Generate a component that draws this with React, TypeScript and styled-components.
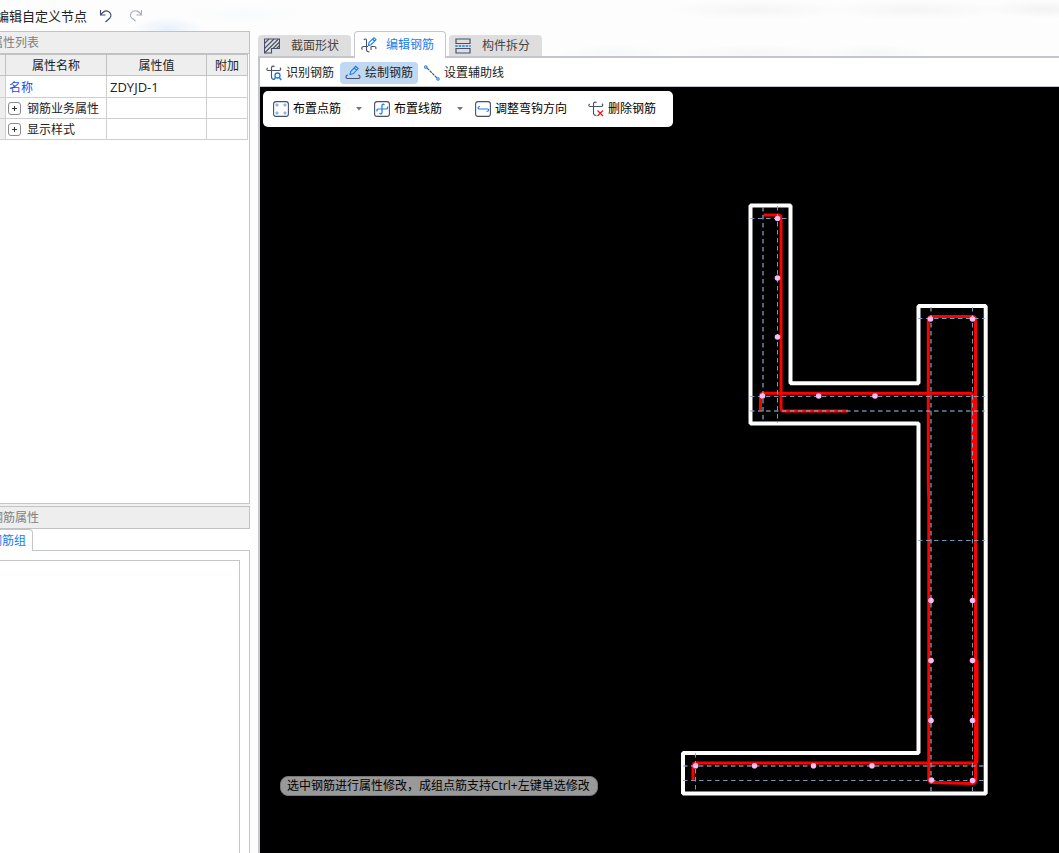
import React from "react";
import styled, { createGlobalStyle, css } from "styled-components";

const LINE = "#c3c6cb";
const BLUE = "#1c7ce6";

const GlobalStyle = createGlobalStyle`
  *, *::before, *::after { box-sizing: border-box; }
  body {
    margin: 0;
    overflow: hidden;
    background: #fdfdfd;
    color: #222;
    font: 12px/16px "Open Sans", "Noto Sans CJK SC", sans-serif;
  }
  button { font: inherit; color: inherit; border: 0; background: none; padding: 0; white-space: nowrap; }
  svg { display: block; flex: none; }
`;

/* The window hangs slightly past the left edge of the screen. */
const Shell = styled.div`
  display: flex;
  flex-direction: column;
  height: 100vh;
  margin-left: -16px;
  background:
    radial-gradient(ellipse 36px 12px at 184px 29px, #e6f1fc, transparent),
    radial-gradient(ellipse 60px 10px at 260px 14px, #f8fafc, transparent),
    radial-gradient(ellipse 90px 10px at 770px 10px, #f5f5f5, transparent),
    radial-gradient(ellipse 90px 10px at 930px 10px, #f5f5f5, transparent),
    radial-gradient(ellipse 60px 9px at 1060px 9px, #f3f3f3, transparent),
    radial-gradient(ellipse 60px 8px at 630px 53px, #f5f7f9, transparent),
    radial-gradient(ellipse 90px 8px at 770px 53px, #f6f6f6, transparent),
    radial-gradient(ellipse 60px 8px at 890px 53px, #f5f6f8, transparent),
    #fdfdfd;
`;

const TitleBar = styled.header`
  display: flex;
  align-items: center;
  flex: none;
  height: 31px;
  padding-left: 12px;
`;

const Title = styled.h1`
  margin: 0 11px 0 0;
  font-size: 13px;
  font-weight: 400;
  line-height: 20px;
`;

const HistoryButton = styled.button`
  width: 16px;
  height: 16px;
  margin-right: 14px;
  color: #3f4a63;
  &:disabled { color: #a9adb5; }
`;

const Body = styled.div`
  display: flex;
  flex: 1;
  min-height: 0;
`;

const Sidebar = styled.aside`
  display: flex;
  flex-direction: column;
  flex: none;
  width: 266px;
  margin-right: 8px;
  background: #f0f0f0;
`;

const Panel = styled.section<{ $fill?: boolean }>`
  display: flex;
  flex-direction: column;
  flex: ${(p) => (p.$fill ? "1" : "0 0 347px")};
  min-height: 0;
  margin-bottom: ${(p) => (p.$fill ? 2 : 0)}px;
  background: #fff;
`;

const PanelTitle = styled.h2`
  flex: none;
  height: 23px;
  margin: 0;
  padding-left: 6px;
  border: 1px solid #c2c2c2;
  background: #eee;
  color: #808080;
  font-size: 12px;
  font-weight: 400;
  line-height: 21px;
`;

const PanelContent = styled.div`
  flex: 1;
  border: 1px solid ${LINE};
  border-top: 0;
`;

const PropertyTable = styled.table`
  width: 263px;
  table-layout: fixed;
  border-collapse: separate;
  border-spacing: 0;
  th, td {
    height: 21px;
    padding: 2px 3px 0;
    border: solid #cfcfcf;
    border-width: 0 1px 1px 0;
    font-weight: 400;
    line-height: 18px;
    text-align: left;
    white-space: nowrap;
  }
  thead th {
    height: 22px;
    border-top-width: 1px;
    border-color: #c2c2c2;
    background: #eee;
    text-align: center;
  }
  td:first-child { background: #eee; }
`;

const PropertyName = styled.span`
  color: #0a50f0;
`;

const PropertyValue = styled.span`
  font-size: 13px;
`;

const TreeLabel = styled.span`
  display: flex;
  align-items: center;
  gap: 6px;
  margin-left: -1px;
`;

const Expander = styled.button`
  width: 13px;
  height: 13px;
  margin-bottom: 2px;
  border: 1px solid #8a8a8a;
  border-radius: 3px;
  background: #fff;
  color: #333;
`;

const GroupTabs = styled.div`
  display: flex;
  flex: none;
  height: 22px;
  margin-bottom: -1px;
`;

const GroupTab = styled.button`
  z-index: 1;
  width: 49px;
  padding-left: 5px;
  border: 1px solid ${LINE};
  border-bottom: 0;
  border-radius: 0 4px 0 0;
  background: #fff;
  color: ${BLUE};
  text-align: left;
`;

const GroupContent = styled.div`
  display: flex;
  flex: 1;
  padding: 9px 9px 0 0;
  border: 1px solid ${LINE};
  border-bottom: 0;
`;

const GroupList = styled.div`
  flex: 1;
  border: 1px solid ${LINE};
  border-bottom: 0;
`;

const Workspace = styled.main`
  display: flex;
  flex-direction: column;
  flex: 1;
  min-width: 0;
`;

const Tabs = styled.div`
  display: flex;
  align-items: flex-end;
  flex: none;
  gap: 3px;
  height: 27px;
  border-bottom: 2px solid ${LINE};
`;

const Tab = styled.button<{ $active?: boolean }>`
  display: flex;
  align-items: center;
  gap: 11px;
  height: 21px;
  padding: 0 12px 0 6px;
  border-radius: 4px 4px 0 0;
  background: #dedede;
  color: #444;
  ${(p) =>
    p.$active &&
    css`
      gap: 9px;
      height: 27px;
      margin-bottom: -2px;
      padding-right: 11px;
      border: 1px solid ${LINE};
      border-bottom: 0;
      background: #fff;
      color: ${BLUE};
    `}
`;

const Frame = styled.div`
  display: flex;
  flex-direction: column;
  flex: 1;
  min-height: 0;
  border-left: 2px solid ${LINE};
  background: #fff;
`;

const Toolbar = styled.div`
  display: flex;
  align-items: center;
  flex: none;
  gap: 1px;
  height: 29px;
  padding: 1px 0 0 1px;
  border-bottom: 1px solid ${LINE};
`;

const Tool = styled.button<{ $active?: boolean }>`
  display: flex;
  align-items: center;
  gap: 4px;
  height: 22px;
  padding: 1px 5px 0;
  border-radius: 4px;
  background: ${(p) => (p.$active ? "#c0d8f1" : "transparent")};
`;

const Canvas = styled.div`
  position: relative;
  flex: 1;
  min-height: 0;
  overflow: hidden;
  background: #000;
`;

const FloatingBar = styled.div`
  position: absolute;
  top: 4px;
  left: 3px;
  display: flex;
  align-items: center;
  gap: 1px;
  height: 36px;
  padding: 0 17px 0 10px;
  border-radius: 5px;
  background: #fff;
  color: #000;
`;

const FloatingTool = styled.button<{ $spaced?: boolean }>`
  display: flex;
  align-items: center;
  gap: 4px;
  height: 24px;
  margin-left: ${(p) => (p.$spaced ? 20 : 0)}px;
`;

const SplitTool = styled.div`
  display: flex;
`;

const DropArrow = styled.button`
  display: grid;
  place-items: center;
  width: 32px;
  padding-left: 4px;
  color: #777;
`;

const Hint = styled.p`
  position: absolute;
  bottom: 57px;
  left: 20px;
  margin: 0;
  padding: 0 7px 0 6px;
  border: 1px solid #777;
  border-radius: 8px;
  background: #999;
  color: #000;
  line-height: 18px;
  white-space: nowrap;
`;

const Drawing = styled.svg`
  width: 100%;
  height: 100%;
`;

const Icon = ({ children, color = "#4a5068" }: { children: React.ReactNode; color?: string }) => (
  <svg width="16" height="16" viewBox="0 0 16 16" fill="none" stroke={color} strokeWidth="1.1" aria-hidden="true">
    {children}
  </svg>
);

const UndoIcon = () => (
  <Icon color="currentColor">
    <path d="M2.500 2v5h5M2.800 6.700C5 3.800 8 2 10.400 3.400c3 1.800 3.200 4.500 1.500 6.600L7.500 14" />
  </Icon>
);
const RedoIcon = () => (
  <Icon color="currentColor">
    <path d="M13.500 2v5h-5M13.200 6.500C11 3 7.500 2 5 3.400c-3 1.800-3.200 4.700-1.500 6.500l4.100 3.100" />
  </Icon>
);
const SectionIcon = () => (
  <Icon>
    <path d="M.500 1h15v9.500H7.500v4.500H.500z" />
    <path d="M.500 5.500 5 1M.500 10.500 10 1M.500 15 14.500 1M9 10.500l6.500-6.500M12.500 10.500l3-3" />
  </Icon>
);
const EditBarIcon = () => (
  <Icon>
    <path d="M8.500 15c-2.500 0-3-1-3-2.500V3.500C5.500 1.500 3.500 1.500 3 3M7 9.500H3C.500 9.500.300 11.500 1.500 12.500M10 9.500h3c2 0 2.500 1.500 1.500 2.500M10 9.500v3.500" />
    <path stroke={BLUE} d="m7.500 8.500.500-3L13 .700l2 2-5 5zM11.500 2l2 2" />
  </Icon>
);
const SplitIcon = () => (
  <Icon>
    <path strokeWidth="1.200" d="M1 5.500v-4.500h14v4.500zM1 10.500v4.500h14v-4.500z" />
    <path stroke={BLUE} strokeWidth="1.300" strokeDasharray="2.500 1" d="M.200 8h15.600" />
  </Icon>
);
const IdentifyIcon = () => (
  <Icon>
    <path d="M1.800 3C.300 3.700.500 5.500 2.500 5.500H13c2 0 2.300-1.800.900-2.700M5.500 3c0-2.200 2.300-2.500 2.800-1M5.500 3v9c0 2 1 2.500 3 2.500" />
    <g stroke={BLUE} strokeWidth="1.300">
      <circle cx="11.500" cy="10.500" r="2.500" />
      <path d="m9.500 12.500-1.500 2M13.300 12.500l2 2.500" />
    </g>
  </Icon>
);
const DrawBarIcon = () => (
  <Icon>
    <path stroke={BLUE} d="m5 9.500.700-3 5-5.200 2.500 2.300-5.200 5.200zM9.300 3l2.400 2.300" />
    <path d="M3 10C.500 10 .300 13.500 2.500 13.500h11c2.200 0 2-3.500-.500-3.500" />
  </Icon>
);
const GuideIcon = () => (
  <Icon>
    <path d="m3 3 10.500 10.500" strokeDasharray="3 .700" />
    <g stroke={BLUE} fill="#fff">
      <circle cx="1.800" cy="2" r="1.200" />
      <circle cx="14" cy="14" r="1.200" />
    </g>
  </Icon>
);
const PointBarIcon = () => (
  <Icon>
    <rect x=".600" y=".600" width="14.800" height="14.800" rx="2.500" />
    <g stroke={BLUE} strokeWidth=".700">
      {[4, 12].map((x) => [4, 12].map((y) => <circle key={`${x}-${y}`} cx={x} cy={y} r="1.100" />))}
    </g>
  </Icon>
);
const LineBarIcon = () => (
  <Icon>
    <rect x=".600" y=".600" width="14.800" height="14.800" rx="2.500" />
    <path
      stroke={BLUE}
      strokeWidth="1.200"
      d="M3.500 10.300C2.300 9.500 2.800 8 4.200 8h8c1.500 0 1.800-1.500.800-2.300M10.200 4.200C10 2.800 8 2.800 8 4.500v7c0 1.800-2 1.800-2.400.500"
    />
  </Icon>
);
const HookIcon = () => (
  <Icon>
    <rect x=".600" y=".600" width="14.800" height="14.800" rx="2.500" />
    <path stroke={BLUE} strokeWidth="1.200" d="M5 5.500C2.500 5.500 2.500 8 4.500 8h8c1.700 0 1.700 2.500-1 2.500" />
  </Icon>
);
const DeleteIcon = () => (
  <Icon>
    <path d="M1.800 3C.300 3.700.500 5.500 2.500 5.500H13c2 0 2.300-1.800.900-2.700M5.500 3c0-2.200 2.300-2.500 2.800-1M5.500 3v9c0 2 1 2.500 3 2.500" />
    <path stroke="#e02020" strokeWidth="1.300" d="m9.500 9.500 5.500 5.500M15 9.500 9.500 15" />
  </Icon>
);

const Plus = () => (
  <svg width="11" height="11" viewBox="0 0 11 11" stroke="currentColor" aria-hidden="true">
    <path d="M3 5.500h5M5.500 3v5" />
  </svg>
);

const Caret = () => (
  <svg width="6" height="4" viewBox="0 0 6 4" fill="currentColor" aria-hidden="true">
    <path d="M0 0h6L3 3.500z" />
  </svg>
);

const guides = ["M763 207V423", "M931 307V793", "M750 411H985", "M683 766H985"];
const thinGuides = [
  "M777.500 206V423", "M972.500 307V793", "M695.500 753V793", "M750 218.500H790",
  "M750 396.500H985", "M918 318.500H985", "M918 540.500H985", "M683 780.500H985",
];
const bars = [
  "M763.500 215H778Q781 215 781 218V408Q781 411 784 411H848",
  "M760.500 410.500V396Q760.500 393.300 763.500 393.300H970Q972.500 393.300 972.500 396V460",
  "M928.300 320Q928.300 316.500 931.500 316.500H972.500Q975.500 316.500 975.500 320V780Q975.500 783.500 972.500 783.500L932 782.500Q928.800 782.500 928.800 779V500Q928.300 490 928.300 480Z",
  "M693 780.500V766Q693 763 696 763H974Q977 763 977 760V660",
];
const points: [number, number][] = [
  [777.5, 218.5], [777.5, 278], [777.5, 337], [762.5, 396], [818.7, 396], [875, 396],
  [930.5, 319], [972.5, 319], [931, 600.5], [972.5, 600.5], [931, 660.5], [972.5, 660.5],
  [931, 720.5], [972.5, 720.5], [931.5, 780], [972.5, 780.5],
  [695.7, 765.7], [754.5, 765.7], [813.5, 765.7], [872, 765.7],
];

const SectionDrawing = () => (
  <Drawing role="img" aria-label="节点截面配筋图">
    <g transform="translate(-260 -87)" fill="none">
      <path
        stroke="#fff"
        strokeWidth="4"
        strokeLinejoin="bevel"
        d="M750.500 205.500H790.500V383.300H918.500V306H985.700V793.500H683V753H918.500V423.500H750.500Z"
      />
      <g stroke="#f00" strokeWidth="3">
        {bars.map((d) => <path key={d} d={d} />)}
      </g>
      <g strokeDasharray="4.500 3.500">
        {guides.map((d) => <path key={d} d={d} stroke="#87aacb" strokeOpacity=".6" strokeWidth="2" />)}
        {thinGuides.map((d) => <path key={d} d={d} stroke="#86a8cc" strokeOpacity=".9" />)}
      </g>
      <g fill="#f3bdf6">
        {points.map(([x, y]) => <circle key={`${x}-${y}`} cx={x} cy={y} r="2.800" />)}
      </g>
    </g>
  </Drawing>
);

const groups = ["钢筋业务属性", "显示样式"];

export default function App() {
  return (
    <>
      <GlobalStyle />
      <Shell>
        <TitleBar>
          <Title>编辑自定义节点</Title>
          <HistoryButton aria-label="撤销"><UndoIcon /></HistoryButton>
          <HistoryButton aria-label="重做" disabled><RedoIcon /></HistoryButton>
        </TitleBar>
        <Body>
          <Sidebar>
            <Panel $fill>
              <PanelTitle>属性列表</PanelTitle>
              <PanelContent>
                <PropertyTable>
                  <colgroup>
                    <col style={{ width: 21 }} />
                    <col style={{ width: 101 }} />
                    <col style={{ width: 100 }} />
                    <col style={{ width: 41 }} />
                  </colgroup>
                  <thead>
                    <tr><th /><th>属性名称</th><th>属性值</th><th>附加</th></tr>
                  </thead>
                  <tbody>
                    <tr>
                      <td />
                      <td><PropertyName>名称</PropertyName></td>
                      <td><PropertyValue>ZDYJD-1</PropertyValue></td>
                      <td />
                    </tr>
                    {groups.map((name) => (
                      <tr key={name}>
                        <td />
                        <td>
                          <TreeLabel>
                            <Expander aria-label={`展开${name}`}><Plus /></Expander>
                            {name}
                          </TreeLabel>
                        </td>
                        <td />
                        <td />
                      </tr>
                    ))}
                  </tbody>
                </PropertyTable>
              </PanelContent>
            </Panel>
            <Panel>
              <PanelTitle>钢筋属性</PanelTitle>
              <GroupTabs role="tablist">
                <GroupTab role="tab" aria-selected>钢筋组</GroupTab>
              </GroupTabs>
              <GroupContent><GroupList /></GroupContent>
            </Panel>
          </Sidebar>
          <Workspace>
            <Tabs role="tablist">
              <Tab role="tab"><SectionIcon />截面形状</Tab>
              <Tab role="tab" aria-selected $active><EditBarIcon />编辑钢筋</Tab>
              <Tab role="tab"><SplitIcon />构件拆分</Tab>
            </Tabs>
            <Frame>
              <Toolbar>
                <Tool><IdentifyIcon />识别钢筋</Tool>
                <Tool $active><DrawBarIcon />绘制钢筋</Tool>
                <Tool><GuideIcon />设置辅助线</Tool>
              </Toolbar>
              <Canvas>
                <SectionDrawing />
                <FloatingBar>
                  <SplitTool>
                    <FloatingTool><PointBarIcon />布置点筋</FloatingTool>
                    <DropArrow aria-label="更多点筋方式"><Caret /></DropArrow>
                  </SplitTool>
                  <SplitTool>
                    <FloatingTool><LineBarIcon />布置线筋</FloatingTool>
                    <DropArrow aria-label="更多线筋方式"><Caret /></DropArrow>
                  </SplitTool>
                  <FloatingTool><HookIcon />调整弯钩方向</FloatingTool>
                  <FloatingTool $spaced><DeleteIcon />删除钢筋</FloatingTool>
                </FloatingBar>
                <Hint>选中钢筋进行属性修改，成组点筋支持Ctrl+左键单选修改</Hint>
              </Canvas>
            </Frame>
          </Workspace>
        </Body>
      </Shell>
    </>
  );
}
